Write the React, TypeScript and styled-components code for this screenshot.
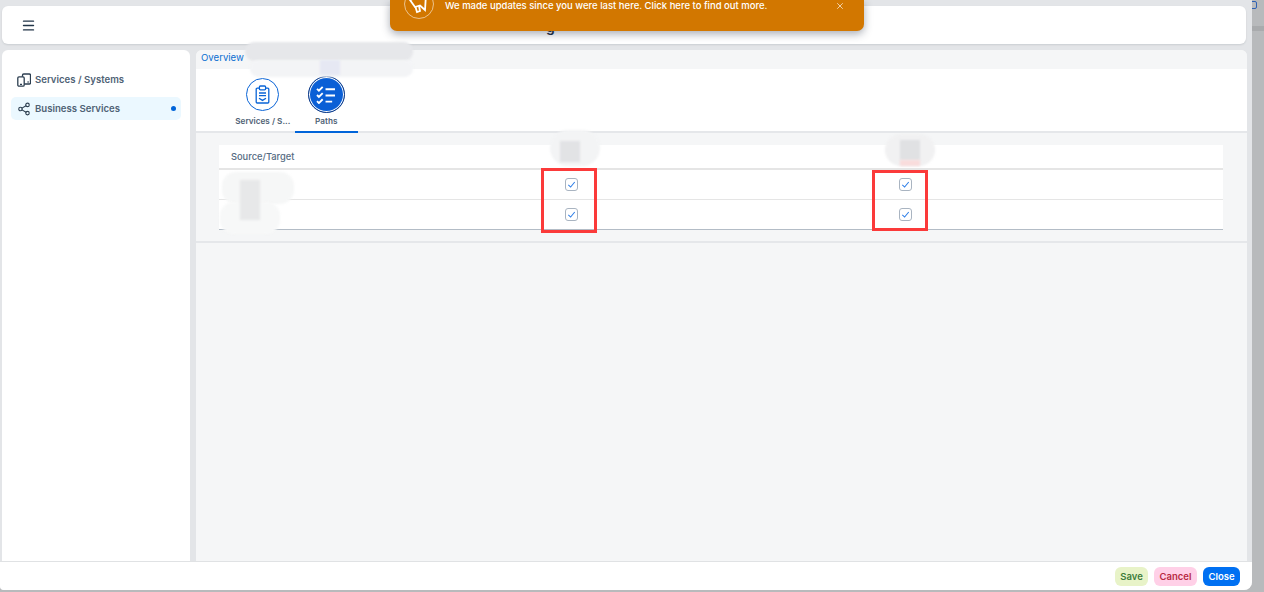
import React from "react";
import styled, { createGlobalStyle } from "styled-components";
import { Share2, Menu, X } from "lucide-react";

const Global = createGlobalStyle`
  html, body { margin: 0; padding: 0; }
  body { font-family: Inter, "Liberation Sans", sans-serif; background: #b8babc; }
`;

const Page = styled.div`
  position: relative;
  width: 1264px;
  height: 592px;
  overflow: hidden;
  background: #b8babc;
`;
const BackBar = styled.div`
  position: absolute;
  top: 26px;
  left: 1252px;
  width: 12px;
  height: 5px;
  background: #a9abad;
`;
const BackIcon = styled.div`
  position: absolute;
  top: 1px;
  left: 1250px;
  width: 7px;
  height: 8px;
  border: 1.5px solid #2f62b5;
  border-radius: 2px;
  box-sizing: border-box;
`;
const Dialog = styled.div`
  position: relative;
  display: flex;
  flex-direction: column;
  box-sizing: border-box;
  width: 1252px;
  height: 590px;
  padding-top: 6px;
  background: #e3e5e8;
  border-radius: 0 0 8px 4px;
  overflow: hidden;
`;
const TopBar = styled.header`
  display: flex;
  align-items: center;
  flex: none;
  height: 38px;
  margin: 0 6px 0 2px;
  padding: 0 19px;
  background: #fff;
  border-radius: 6px;
  box-shadow: 0 1px 2px rgba(60, 70, 80, 0.14);
  color: #223548;
`;
const TitleTail = styled.span`
  margin-left: 510px;
  padding-top: 3px;
  font-size: 14px;
  font-weight: 600;
  color: #1d2d3e;
`;
const Workspace = styled.div`
  display: flex;
  flex: 1;
  min-height: 0;
  gap: 6px;
  margin: 6px 5px 0 2px;
`;
const Sidebar = styled.nav`
  display: flex;
  flex-direction: column;
  gap: 6px;
  flex: none;
  box-sizing: border-box;
  width: 188px;
  padding: 18px 9px 0;
  background: #fff;
  border-radius: 6px 6px 0 0;
`;
const NavItem = styled.div<{ $active?: boolean }>`
  display: flex;
  align-items: center;
  gap: 4px;
  height: 23px;
  padding: 0 5px 0 6px;
  border-radius: 5px;
  background: ${(p) => (p.$active ? "#ebf8ff" : "transparent")};
  color: #4f6275;
  font-size: 9.6px;
  font-weight: 600;
  svg { color: #2c3e50; flex: none; }
`;
const NavLabel = styled.span`
  flex: 1;
`;
const NavDot = styled.span`
  width: 5px;
  height: 5px;
  margin-right: 0;
  border-radius: 50%;
  background: #0064d9;
`;
const Main = styled.main`
  display: flex;
  flex-direction: column;
  flex: 1;
  min-width: 0;
  background: #f5f6f7;
  border-radius: 6px 6px 0 0;
  overflow: hidden;
`;
const Breadcrumb = styled.div`
  flex: none;
  box-sizing: border-box;
  height: 19px;
  padding: 1px 0 0 5px;
  line-height: 13px;
  color: #0a6ed1;
  font-size: 9.6px;
  background: #f5f6f7;
`;
const Tabs = styled.div`
  display: flex;
  flex: none;
  box-sizing: border-box;
  height: 64px;
  padding-left: 35px;
  background: #fff;
  border-bottom: 2px solid #e5e7ea;
`;
const Tab = styled.div<{ $active?: boolean }>`
  position: relative;
  display: flex;
  flex-direction: column;
  align-items: center;
  justify-content: flex-end;
  box-sizing: border-box;
  width: 63.5px;
  padding-bottom: 5px;
  gap: 3px;
  font-size: 8.2px;
  font-weight: 600;
  color: #4f6275;
  white-space: nowrap;
  border-bottom: ${(p) => (p.$active ? "2.5px solid #0064d9" : "2.5px solid transparent")};
  margin-bottom: -2px;
`;
const TabCircle = styled.div<{ $active?: boolean }>`
  display: flex;
  align-items: center;
  justify-content: center;
  box-sizing: border-box;
  width: ${(p) => (p.$active ? "37px" : "33px")};
  height: ${(p) => (p.$active ? "37px" : "33px")};
  margin-bottom: ${(p) => (p.$active ? "0" : "2px")};
  border-radius: 50%;
  border: ${(p) => (p.$active ? "1.5px solid #113b85" : "1.5px solid #0a64d6")};
  background: ${(p) => (p.$active ? "#0a5fd6" : "#fff")};
  box-shadow: ${(p) => (p.$active ? "inset 0 0 0 1px #fff" : "none")};
  color: ${(p) => (p.$active ? "#fff" : "#0a64d6")};
`;
const Content = styled.section`
  flex: none;
  box-sizing: border-box;
  height: 110px;
  padding: 12px 24px 0 23px;
  border-bottom: 2px solid #e5e7ea;
`;
const Table = styled.div`
  display: grid;
  grid-template-columns: 185px 334px 334px 1fr;
  grid-template-rows: 25px 30px 29px;
  background: #fff;
  border-bottom: 1px solid #b3bcc6;
`;
const Cell = styled.div<{ $head?: boolean; $last?: boolean }>`
  display: flex;
  align-items: center;
  justify-content: ${(p) => (p.$head ? "flex-start" : "center")};
  padding-left: ${(p) => (p.$head ? "12px" : "0")};
  font-size: 9.3px;
  font-weight: 500;
  color: #556b82;
  box-sizing: border-box;
  border-bottom: ${(p) => (p.$head ? "2px solid #e5e5e5" : p.$last ? "none" : "1px solid #e5e5e5")};
`;
const Check = styled.div`
  display: flex;
  align-items: center;
  justify-content: center;
  box-sizing: border-box;
  width: 13px;
  height: 13px;
  border: 1.5px solid #a9b4c1;
  border-radius: 3px;
  background: #fff;
`;
const Filler = styled.div`
  flex: 1;
`;
const Footer = styled.footer`
  display: flex;
  align-items: center;
  justify-content: flex-end;
  gap: 6px;
  flex: none;
  box-sizing: border-box;
  height: 29px;
  padding: 0 12px 0 0;
  background: #fff;
  border-top: 1px solid #e0e2e4;
`;
const Btn = styled.button<{ $bg: string; $fg: string; $w: number }>`
  box-sizing: border-box;
  width: ${(p) => p.$w}px;
  height: 19px;
  padding: 0;
  border: 0;
  border-radius: 6px;
  background: ${(p) => p.$bg};
  color: ${(p) => p.$fg};
  font-family: inherit;
  font-size: 9.5px;
  font-weight: 600;
`;
const Toast = styled.div`
  position: absolute;
  top: 0;
  left: 390px;
  display: flex;
  align-items: flex-start;
  box-sizing: border-box;
  width: 474px;
  height: 31px;
  padding-left: 14px;
  background: #d27700;
  border-radius: 0 0 7px 7px;
  box-shadow: 0 3px 8px rgba(40, 50, 70, 0.4);
  color: #fff;
`;
const ToastIcon = styled.div`
  display: flex;
  align-items: center;
  justify-content: center;
  flex: none;
  box-sizing: border-box;
  width: 30px;
  height: 30px;
  margin-top: -11px;
  border: 1px solid rgba(255, 255, 255, 0.55);
  border-radius: 50%;
`;
const ToastText = styled.span`
  flex: none;
  margin: 0 0 0 11px;
  width: 390px;
  font-size: 9.5px;
  line-height: 11px;
  font-weight: 500;
  white-space: nowrap;
`;
const ToastClose = styled.span`
  margin-top: 1px;
  color: rgba(255, 255, 255, 0.65);
  display: flex;
`;
const Blur = styled.div<{ $x: number; $y: number; $w: number; $h: number; $bg: string; $r?: number }>`
  position: absolute;
  left: ${(p) => p.$x}px;
  top: ${(p) => p.$y}px;
  width: ${(p) => p.$w}px;
  height: ${(p) => p.$h}px;
  background: ${(p) => p.$bg};
  border-radius: ${(p) => p.$r ?? 20}px;
  filter: blur(0.8px);
`;
const Mark = styled.div<{ $x: number; $y: number; $w: number; $h: number }>`
  position: absolute;
  left: ${(p) => p.$x}px;
  top: ${(p) => p.$y}px;
  width: ${(p) => p.$w}px;
  height: ${(p) => p.$h}px;
  box-sizing: border-box;
  border: 3px solid #fb3a3a;
`;

const CheckMark = () => (
  <svg width="9" height="9" viewBox="0 0 10 10" fill="none" stroke="#2f7fe8" strokeWidth="1.2">
    <path d="M1.5 5.4 4 7.8 8.6 2.2" />
  </svg>
);
const DevicesIcon = () => (
  <svg width="14" height="14" viewBox="0 0 14 14" fill="none" stroke="currentColor" strokeWidth="1.3">
    <rect x="5.5" y="1" width="8" height="10" rx="1.2" />
    <rect x="0.8" y="3.8" width="6.4" height="9.4" rx="1.2" fill="#fff" />
    <path d="M3 11.4h2M10.5 9h1.2" />
  </svg>
);
const ClipboardIcon = () => (
  <svg width="17" height="19" viewBox="0 0 17 19" fill="none" stroke="currentColor" strokeWidth="1.3">
    <path d="M5 3.2H3.2a1 1 0 0 0-1 1V17a1 1 0 0 0 1 1h10.6a1 1 0 0 0 1-1V4.2a1 1 0 0 0-1-1H12" />
    <rect x="5.4" y="1" width="6.2" height="3.8" rx="1" />
    <path d="M5 8h7M5 10.6h7M5 13.2l3.5 2.2 3.5-2.2" />
  </svg>
);
const ChecklistIcon = () => (
  <svg width="20" height="18" viewBox="0 0 21 19" fill="none" stroke="currentColor" strokeWidth="2">
    <path d="M1 3 3 5 7 1M1 9.5l2 2 4-4M1 16l2 2 4-4" />
    <path d="M10 3.5h10M10 10h10M10 16.5h7" />
  </svg>
);
const MegaphoneIcon = () => (
  <svg width="22" height="22" viewBox="0 0 22 22" fill="none" stroke="#fff" strokeWidth="1.8">
    <path d="M2 7 18 1.5 17 17 12 12.5 7 14 2 7Z" />
    <path d="M7.5 14l1.5 5 3-1-1-5" />
  </svg>
);

const rows = [0, 1];

export default function App() {
  return (
    <Page>
      <Global />
      <BackBar />
      <BackIcon />
      <Dialog>
        <TopBar>
          <Menu size={15} strokeWidth={2.2} />
          <TitleTail>g</TitleTail>
        </TopBar>
        <Workspace>
          <Sidebar>
            <NavItem>
              <DevicesIcon />
              <NavLabel>Services / Systems</NavLabel>
            </NavItem>
            <NavItem $active>
              <Share2 size={14} strokeWidth={1.9} />
              <NavLabel>Business Services</NavLabel>
              <NavDot />
            </NavItem>
          </Sidebar>
          <Main>
            <Breadcrumb>Overview</Breadcrumb>
            <Tabs>
              <Tab>
                <TabCircle>
                  <ClipboardIcon />
                </TabCircle>
                Services / S...
              </Tab>
              <Tab $active>
                <TabCircle $active>
                  <ChecklistIcon />
                </TabCircle>
                Paths
              </Tab>
            </Tabs>
            <Content>
              <Table>
                <Cell $head>Source/Target</Cell>
                <Cell $head />
                <Cell $head />
                <Cell $head />
                {rows.map((r) => (
                  <React.Fragment key={r}>
                    <Cell $last={r === 1} />
                    <Cell $last={r === 1}>
                      <Check>
                        <CheckMark />
                      </Check>
                    </Cell>
                    <Cell $last={r === 1}>
                      <Check>
                        <CheckMark />
                      </Check>
                    </Cell>
                    <Cell $last={r === 1} />
                  </React.Fragment>
                ))}
              </Table>
            </Content>
            <Filler />
          </Main>
        </Workspace>
        <Footer>
          <Btn $bg="#e8f3c8" $fg="#3f7d3c" $w={33}>Save</Btn>
          <Btn $bg="#ffd0e7" $fg="#b82a44" $w={43}>Cancel</Btn>
          <Btn $bg="#0070f2" $fg="#fff" $w={37}>Close</Btn>
        </Footer>
      </Dialog>

      <Blur $x={245} $y={42} $w={168} $h={19} $bg="#e6e7ea" $r={9} />
      <Blur $x={250} $y={60} $w={163} $h={17} $bg="#f3f4f6" $r={9} />
      <Blur $x={320} $y={60} $w={20} $h={15} $bg="#e6e8f3" $r={0} />

      <Blur $x={550} $y={130} $w={50} $h={36} $bg="#f3f4f5" />
      <Blur $x={560} $y={141} $w={20} $h={21} $bg="#e2e3e5" $r={0} />
      <Blur $x={885} $y={134} $w={50} $h={32} $bg="#f1f1f2" />
      <Blur $x={900} $y={140} $w={20} $h={20} $bg="#e0e1e3" $r={0} />
      <Blur $x={900} $y={160} $w={20} $h={6} $bg="#f9dcdc" $r={0} />

      <Blur $x={222} $y={172} $w={72} $h={32} $bg="#f6f7f7" $r={14} />
      <Blur $x={220} $y={202} $w={60} $h={32} $bg="#f7f8f8" $r={14} />
      <Blur $x={240} $y={180} $w={20} $h={40} $bg="#e7e8e9" $r={0} />

      <Mark $x={541} $y={168} $w={56} $h={65} />
      <Mark $x={872} $y={170} $w={56} $h={61} />

      <Toast>
        <ToastIcon>
          <MegaphoneIcon />
        </ToastIcon>
        <ToastText>We made updates since you were last here. Click here to find out more.</ToastText>
        <ToastClose>
          <X size={10} strokeWidth={2.4} />
        </ToastClose>
      </Toast>
    </Page>
  );
}
